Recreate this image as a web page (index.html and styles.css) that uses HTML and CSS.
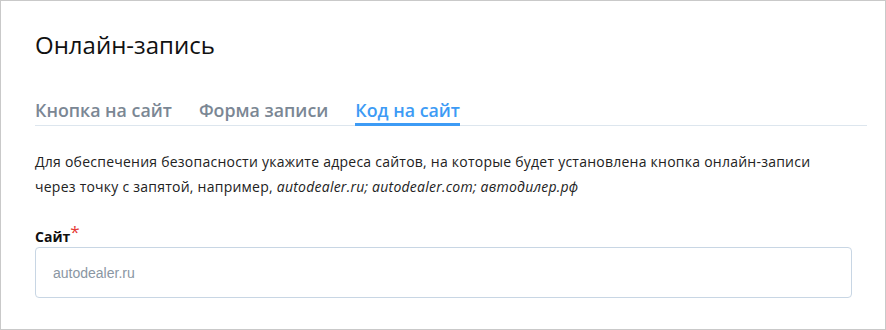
FILE: index.html
```html
<!DOCTYPE html>
<html lang="ru">
<head>
  <meta charset="UTF-8">
  <meta name="viewport" content="width=device-width, initial-scale=1">
  <title>Онлайн-запись</title>
  <link rel="stylesheet" href="styles.css">
</head>
<body>

  <div class="card">
    <h1 class="title">Онлайн-запись</h1>

    <div class="tabs">
      <div class="tab">Кнопка на сайт</div>
      <div class="tab">Форма записи</div>
      <div class="tab active">Код на сайт</div>
    </div>

    <p class="hint">
      Для обеспечения безопасности укажите адреса сайтов, на которые будет установлена кнопка онлайн-записи
      через точку с запятой, например, <i>autodealer.ru; autodealer.com; автодилер.рф</i>
    </p>

    <label class="label" for="site">Сайт<span class="req">*</span></label>
    <input class="input" id="site" type="text" placeholder="autodealer.ru">
  </div>

</body>
</html>
```

FILE: styles.css
```css
body {
  margin: 0;
  font-family: 'Open Sans', sans-serif;
  background: #ffffff;
  color: #1a1a1a;
}
.card {
  box-sizing: border-box;
  width: 886px;
  height: 330px;
  border: 1px solid #c9c9c9;
  padding: 0 18px 0 34px;
}
.title {
  margin: 27px 0 0;
  font-size: 24px;
  font-weight: 400;
  line-height: 34px;
  color: #111;
}
.tabs {
  display: flex;
  gap: 27px;
  margin-top: 36px;
  border-bottom: 1px solid #dde6ee;
}
.tab {
  font-size: 17.8px;
  font-weight: 600;
  color: #7b8794;
  line-height: 24px;
  padding-bottom: 1px;
  margin-bottom: -1px;
  border-bottom: 3px solid transparent;
}
.tab.active {
  color: #3d9bf5;
  border-bottom-color: #3d9bf5;
}
.hint {
  max-width: 800px;
  margin: 23px 0 0;
  font-size: 14px;
  line-height: 25px;
  letter-spacing: 0.24px;
  color: #222;
}
.label {
  display: block;
  margin-top: 29px;
  font-size: 14px;
  font-weight: 700;
  line-height: 18px;
  color: #111;
}
.req {
  color: #e53935;
  font-weight: 400;
  font-size: 17px;
  line-height: 10px;
  vertical-align: top;
  position: relative;
  top: -1px;
}
.input {
  box-sizing: border-box;
  display: block;
  width: 817px;
  height: 51px;
  margin-top: 1px;
  padding: 0 17px;
  border: 1px solid #c8d6e4;
  border-radius: 4px;
  font-family: 'Liberation Sans', sans-serif;
  font-size: 14px;
  color: #222;
}
.input::placeholder {
  color: #8a96a3;
}
```
